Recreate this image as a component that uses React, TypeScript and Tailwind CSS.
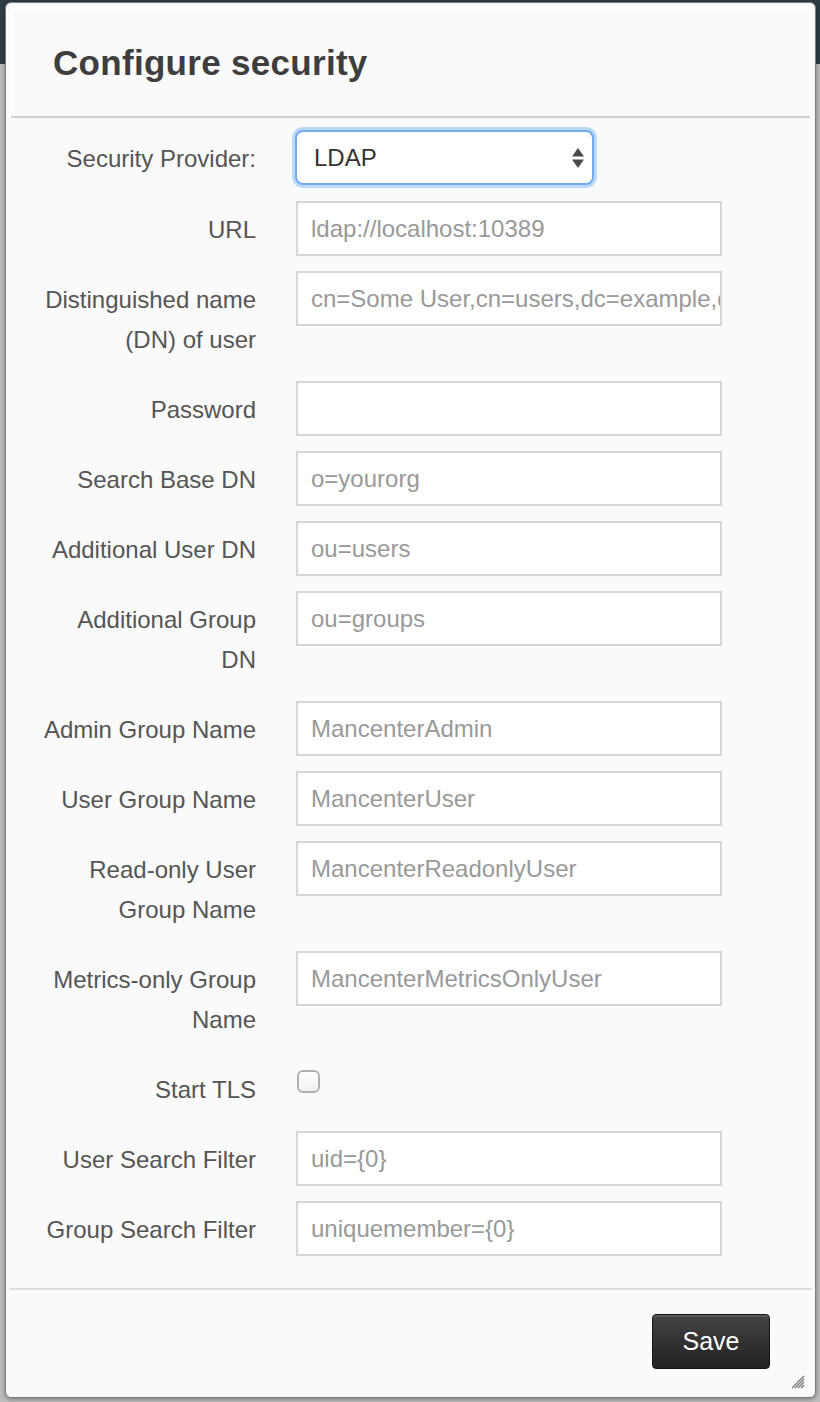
import React from "react";

const font = { fontFamily: '"Liberation Sans", Arial, Helvetica, sans-serif' };

function Label({ lines }: { lines: string[] }) {
  return (
    <div className="w-[245px] shrink-0 text-right pt-[9px] pb-[6px] leading-[40px] text-[24px] text-[#555] whitespace-nowrap">
      {lines.map((l, i) => (
        <div key={i}>{l}</div>
      ))}
    </div>
  );
}

function InputRow({ lines, placeholder }: { lines: string[]; placeholder: string }) {
  return (
    <div className="flex items-start mb-[15px]">
      <Label lines={lines} />
      <input
        type="text"
        readOnly
        placeholder={placeholder}
        className="ml-[40px] w-[426px] h-[55px] bg-white border-2 border-[#d6d6d6] pl-[13px] pr-0 text-[24px] text-[#555] placeholder:text-[#999] outline-none"
        style={font}
      />
    </div>
  );
}

export default function App() {
  return (
    <div className="relative w-[820px] h-[1402px] bg-[#bcbcbc] overflow-hidden" style={font}>
      <div className="h-[64px] bg-[#2d3e46]" />
      <div className="absolute left-[5px] top-[2px] w-[811px] h-[1396px] bg-[#fafafa] border border-[#7d7d7d] rounded-[6px] shadow-[0_1px_4px_rgba(0,0,0,0.4)] flex flex-col">
        <div className="mx-[5px] mt-[5px] border border-b-0 border-white">
          <div className="h-[107px] flex items-center pl-[41px] pt-[2px]">
            <h1 className="text-[35px] font-bold text-[#3e3e3e] tracking-[0.3px]">Configure security</h1>
          </div>
        </div>
        <div className="mx-[5px] h-[2px] bg-[#cfcfcf]" />
        <div className="mx-[5px] pt-[12px] pb-[17px]">
          <div className="flex items-start mb-[16px]">
            <Label lines={["Security Provider:"]} />
            <div className="ml-[39px] w-[299px] h-[55px] bg-white border-2 border-[#72abf0] rounded-[8px] shadow-[0_0_0_3px_#bdd9f8] flex items-center justify-between pl-[17px] pr-[7px]">
              <span className="text-[24px] text-[#333]">LDAP</span>
              <svg width="14" height="22" viewBox="0 0 14 22">
                <polygon points="7,1 13,9.5 1,9.5" fill="#4a4a4a" />
                <polygon points="1,12.5 13,12.5 7,21" fill="#4a4a4a" />
              </svg>
            </div>
          </div>
          <InputRow lines={["URL"]} placeholder="ldap://localhost:10389" />
          <InputRow lines={["Distinguished name", "(DN) of user"]} placeholder="cn=Some User,cn=users,dc=example,dc=com" />
          <InputRow lines={["Password"]} placeholder="" />
          <InputRow lines={["Search Base DN"]} placeholder="o=yourorg" />
          <InputRow lines={["Additional User DN"]} placeholder="ou=users" />
          <InputRow lines={["Additional Group", "DN"]} placeholder="ou=groups" />
          <InputRow lines={["Admin Group Name"]} placeholder="MancenterAdmin" />
          <InputRow lines={["User Group Name"]} placeholder="MancenterUser" />
          <InputRow lines={["Read-only User", "Group Name"]} placeholder="MancenterReadonlyUser" />
          <InputRow lines={["Metrics-only Group", "Name"]} placeholder="MancenterMetricsOnlyUser" />
          <div className="flex items-start mb-[15px]">
            <Label lines={["Start TLS"]} />
            <div className="ml-[41px] mt-[9px] w-[23px] h-[23px] rounded-[6px] border-2 border-[#b0b0b0] bg-gradient-to-b from-white to-[#f0f0f0]" />
          </div>
          <InputRow lines={["User Search Filter"]} placeholder="uid={0}" />
          <InputRow lines={["Group Search Filter"]} placeholder="uniquemember={0}" />
        </div>
        <div className="mx-[3px] h-[2px] bg-[#dddddd]" />
        <div className="flex justify-end pt-[24px] pr-[45px]">
          <button className="w-[118px] h-[55px] rounded-[4px] border border-[#151515] bg-gradient-to-b from-[#444] to-[#222] shadow-[inset_0_2px_0_#5a5a5a] text-white text-[25px]" style={font}>
            Save
          </button>
        </div>
        <svg className="absolute right-[10px] bottom-[8px]" width="16" height="16" viewBox="0 0 16 16">
          <line x1="15" y1="3" x2="3" y2="15" stroke="#777" strokeWidth="1.3" />
          <line x1="15" y1="6" x2="6" y2="15" stroke="#777" strokeWidth="1.3" />
          <line x1="15" y1="9" x2="9" y2="15" stroke="#777" strokeWidth="1.3" />
          <line x1="15" y1="12" x2="12" y2="15" stroke="#777" strokeWidth="1.3" />
        </svg>
      </div>
    </div>
  );
}
